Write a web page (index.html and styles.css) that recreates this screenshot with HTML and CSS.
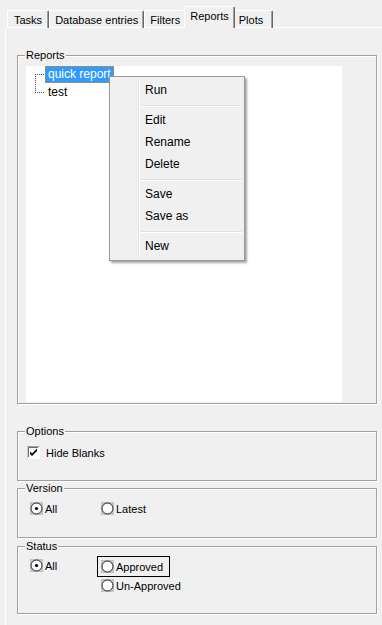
FILE: index.html
```html
<!DOCTYPE html>
<html lang="en">

<head>
    <meta charset="UTF-8">
    <meta name="viewport" content="width=device-width, initial-scale=1.0">
    <title>Reports</title>
    <link rel="stylesheet" href="styles.css">
</head>

<body>
    <div class="tabs">
        <div class="tab">Tasks</div>
        <div class="tab">Database entries</div>
        <div class="tab">Filters</div>
        <div class="tab active">Reports</div>
        <div class="tab">Plots</div>
    </div>

    <div class="panel">
        <div class="group reports">
            <div class="title">Reports</div>
            <div class="tree">
                <ul class="nodes">
                    <li class="node"><span class="label selected">quick report</span></li>
                    <li class="node"><span class="label">test</span></li>
                </ul>
            </div>
        </div>

        <div class="group options">
            <div class="title">Options</div>
            <label class="check">
                <svg width="13" height="13" viewBox="0 0 13 13">
                    <rect x="0" y="0" width="13" height="13" fill="#fff" />
                    <path d="M0 12.5V0.5H12.5" fill="none" stroke="#a0a0a0" />
                    <path d="M1.5 11V1.5H11" fill="none" stroke="#696969" />
                    <path d="M3 5.5l2 2 5-5v2.5l-5 5-2-2z" fill="#000" />
                </svg>
                <span>Hide Blanks</span>
            </label>
        </div>

        <div class="group version">
            <div class="title">Version</div>
            <div class="radios">
                <label class="radio">
                    <svg width="13" height="13" viewBox="0 0 13 13">
                        <rect width="13" height="13" fill="#c4c4c4" />
                        <circle cx="6.5" cy="6.5" r="5.5" fill="#fff" stroke="#222" />
                        <circle cx="6.5" cy="6.5" r="1.6" fill="#000" />
                    </svg>
                    <span>All</span>
                </label>
                <label class="radio">
                    <svg width="13" height="13" viewBox="0 0 13 13">
                        <rect width="13" height="13" fill="#c4c4c4" />
                        <circle cx="6.5" cy="6.5" r="5.5" fill="#fff" stroke="#222" />
                    </svg>
                    <span>Latest</span>
                </label>
            </div>
        </div>

        <div class="group status">
            <div class="title">Status</div>
            <div class="radios">
                <label class="radio">
                    <svg width="13" height="13" viewBox="0 0 13 13">
                        <rect width="13" height="13" fill="#c4c4c4" />
                        <circle cx="6.5" cy="6.5" r="5.5" fill="#fff" stroke="#222" />
                        <circle cx="6.5" cy="6.5" r="1.6" fill="#000" />
                    </svg>
                    <span>All</span>
                </label>
                <div class="stack">
                    <label class="radio focused">
                        <svg width="13" height="13" viewBox="0 0 13 13">
                            <rect width="13" height="13" fill="#c4c4c4" />
                            <circle cx="6.5" cy="6.5" r="5.5" fill="#fff" stroke="#222" />
                        </svg>
                        <span>Approved</span>
                    </label>
                    <label class="radio">
                        <svg width="13" height="13" viewBox="0 0 13 13">
                            <rect width="13" height="13" fill="#c4c4c4" />
                            <circle cx="6.5" cy="6.5" r="5.5" fill="#fff" stroke="#222" />
                        </svg>
                        <span>Un-Approved</span>
                    </label>
                </div>
            </div>
        </div>
    </div>

    <!-- context menu for the selected report -->
    <ul class="menu">
        <li class="item">Run</li>
        <li class="sep"></li>
        <li class="item">Edit</li>
        <li class="item">Rename</li>
        <li class="item">Delete</li>
        <li class="sep"></li>
        <li class="item">Save</li>
        <li class="item">Save as</li>
        <li class="sep"></li>
        <li class="item">New</li>
    </ul>
</body>

</html>
```

FILE: styles.css
```css
:root {
    --face: #f0f0f0;
    --shadow: #a0a0a0;
    --dark: #696969;
    --light: #fff;
    --select: #3399ff;
}

* {
    box-sizing: border-box;
}

html,
body {
    margin: 0;
    padding: 0;
    background: var(--face);
    height: 625px;
    overflow: hidden;
}

body {
    position: relative;
    font-family: "Liberation Sans", Arial, sans-serif;
    font-size: 11px;
    color: #000;
}

ul {
    list-style: none;
    margin: 0;
    padding: 0;
}

/* tab strip */
.tabs {
    display: flex;
    align-items: flex-end;
    height: 28px;
    padding-left: 7px;
    position: relative;
    z-index: 1;
}

.tab {
    height: 18px;
    padding: 3px 5px 0 5px;
    border-left: 1px solid var(--light);
    border-top: 1px solid var(--light);
    border-right: 1px solid var(--dark);
    box-shadow: inset -1px 0 0 var(--shadow);
    border-top-left-radius: 2px;
    border-top-right-radius: 2px;
    white-space: nowrap;
}

.tab:first-child {
    padding: 3px 6px 0 6px;
}

.tab:last-child {
    padding: 3px 9px 0 5px;
}

.tab.active {
    height: 22px;
    margin: 0 -2px 0 -2px;
    padding: 3px 5px 0 5px;
    background: var(--face);
    position: relative;
    z-index: 2;
}

/* page panel */
.panel {
    width: 420px;
    height: 640px;
    margin-left: 5px;
    margin-top: -1px;
    border-top: 1px solid var(--light);
    border-left: 1px solid var(--light);
    padding: 27px 0 0 11px;
}

.group {
    width: 360px;
    border: 1px solid var(--shadow);
    box-shadow: 1px 1px 0 var(--light), inset 1px 1px 0 var(--light);
}

.group .title {
    display: table;
    margin: -7px 0 0 7px;
    padding: 0 1px;
    line-height: 13px;
    background: var(--face);
}

/* report tree */
.reports {
    height: 349px;
}

.reports .tree {
    margin: 4px 0 0 8px;
    width: 316px;
    height: 336px;
    background: #fff;
    font-size: 12px;
}

.nodes {
    position: relative;
    padding-left: 19px;
}

.nodes::before {
    content: "";
    position: absolute;
    left: 9px;
    top: 8px;
    height: 19px;
    border-left: 1px dotted #555;
}

.node {
    position: relative;
    height: 18px;
}

.node::before {
    content: "";
    position: absolute;
    left: -10px;
    top: 8px;
    width: 9px;
    border-top: 1px dotted #555;
}

.label {
    display: inline-block;
    height: 17px;
    line-height: 15px;
    padding: 0 2px;
    border: 1px solid transparent;
}

.label.selected {
    background: var(--select);
    color: #fff;
    border: 1px dotted #e08a00;
}

/* lower groups */
.options {
    margin-top: 27px;
    height: 50px;
}

.check {
    display: flex;
    align-items: center;
    gap: 6px;
    margin: 8px 0 0 9px;
}

.version {
    margin-top: 7px;
    height: 50px;
}

.version .radios {
    margin: 7px 0 0 12px;
}

.status {
    margin-top: 8px;
    height: 68px;
}

.status .radios {
    margin: 6px 0 0 12px;
}

.radios {
    display: grid;
    grid-template-columns: 71px auto;
    align-items: start;
}

.radio {
    display: flex;
    align-items: center;
    gap: 2px;
    height: 13px;
}

.stack {
    display: flex;
    flex-direction: column;
    gap: 6px;
}

.radio.focused {
    outline: 1px solid #000;
    outline-offset: 3px;
    width: 65px;
    margin-top: 1px;
}

/* context menu */
.menu {
    position: absolute;
    left: 109px;
    top: 76px;
    width: 136px;
    padding: 3px 2px 2px 2px;
    background: var(--face);
    border: 1px solid #979797;
    box-shadow: 2px 2px 2px rgba(0, 0, 0, 0.35);
    font-size: 12px;
    z-index: 5;
}

.menu::before {
    content: "";
    position: absolute;
    left: 28px;
    top: 2px;
    bottom: 2px;
    border-left: 1px solid #e2e3e3;
    border-right: 1px solid #fff;
}

.menu .item {
    height: 22px;
    line-height: 21px;
    padding-left: 33px;
}

.menu .sep {
    height: 8px;
    margin-left: 29px;
    padding-top: 3px;
}

.menu .sep::after {
    content: "";
    display: block;
    border-top: 1px solid #e0e0e0;
    border-bottom: 1px solid #fff;
}
```
